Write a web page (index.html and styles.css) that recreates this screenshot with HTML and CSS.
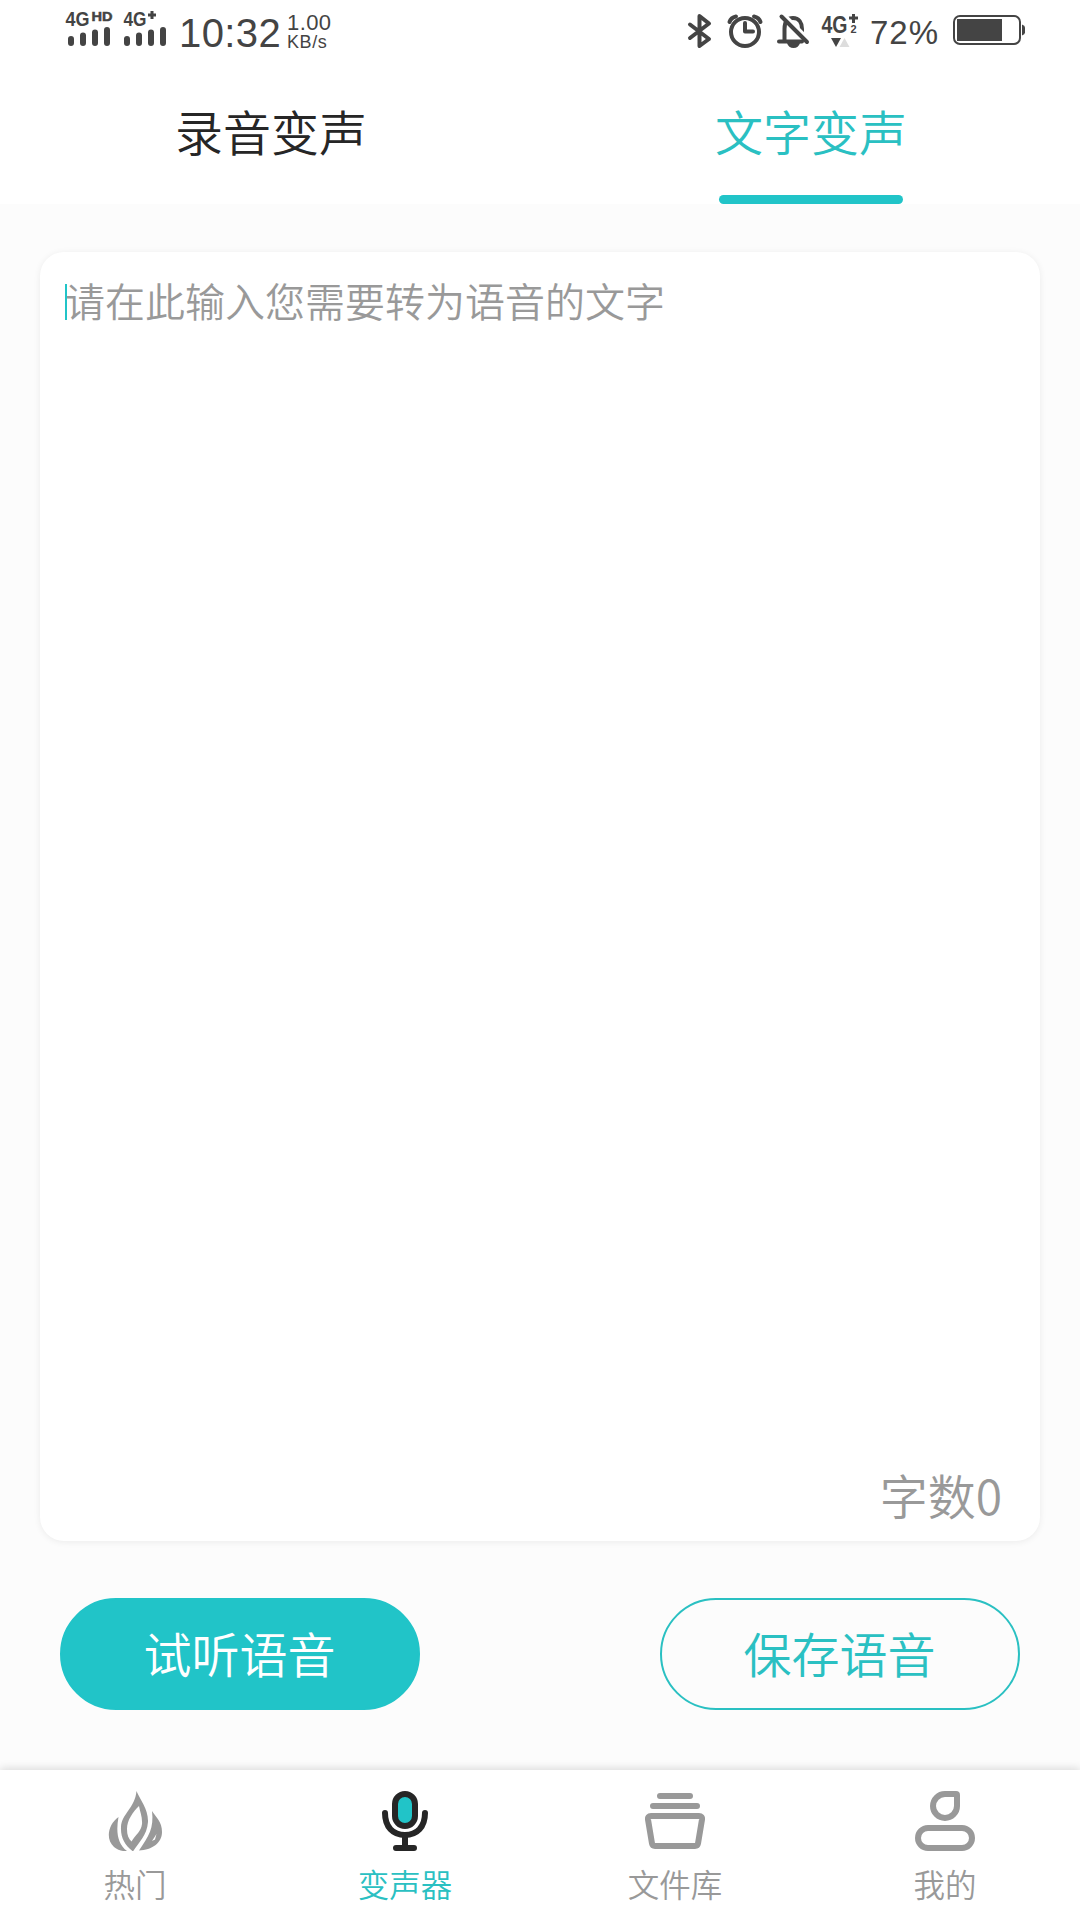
FILE: index.html
```html
<!doctype html>
<html lang="zh-CN">
<head>
<meta charset="utf-8">
<title>变声器</title>
<link rel="stylesheet" href="styles.css">
</head>
<body>
<div class="page">
	<div class="header">
		<div class="status">
			<svg class="signal" width="106" height="60" viewBox="64 0 106 60">
				<text class="net" x="65.5" y="26" textLength="24" lengthAdjust="spacingAndGlyphs">4G</text>
				<text class="sup" x="91.500" y="20.500" textLength="21" lengthAdjust="spacingAndGlyphs">HD</text>
				<text class="net" x="123.5" y="26" textLength="23" lengthAdjust="spacingAndGlyphs">4G</text>
				<path class="line3" d="M148 15h8M152 11v8"/>
				<path class="bars" d="M71 39v4M83 35.500v7.500M95 32.500v10.500M107 30v13M127 39v4M139 35.500v7.500M151 32.500v10.500M163 30v13"/>
			</svg>
			<span class="time">10:32</span>
			<span class="speed"><span>1.00</span><small>KB/s</small></span>
			<svg class="icons" width="175" height="60" viewBox="686 0 175 60">
				<path class="line4" d="M690 24.500L709 39L699.500 46V16L709 23.500L690 38"/>
				<circle class="line4" cx="745" cy="32" r="14"/>
				<path class="line4" d="M745 23v8.500h8"/>
				<path class="line4" d="M729.500 22Q731 17.500 736 16.500M760.500 22Q759 17.500 754 16.500"/>
				<path class="line4" d="M784.500 41V29C784.500 21 788 18 793 18C799 18 802 23 802 29V36M779 41.500H802"/>
				<path class="fill" d="M787 43h13q-1.500 5-6.500 5t-6.500-5z"/>
				<path class="cut" d="M784 15l27 27"/>
				<path class="line4" d="M781.500 16.500L807 42"/>
				<text class="net4" x="821.500" y="32.500" textLength="26" lengthAdjust="spacingAndGlyphs">4G</text>
				<path class="line3" d="M849 18h9M853.500 14v9"/>
				<text class="two" x="850.500" y="33">2</text>
				<path class="fill" d="M831 38h10l-5 9z"/>
				<path class="faint" d="M839.500 47h10l-5-9z"/>
			</svg>
			<span class="percent">72%</span>
			<svg class="battery" width="74" height="32" viewBox="952 15 74 32">
				<rect class="line2" x="954" y="17" width="66" height="28" rx="6"/>
				<path class="fill" d="M957 20h45v22h-45z"/>
				<path class="fill" d="M1022 25.500q3 1 3 3v5q0 2-3 3z"/>
			</svg>
		</div>
		<ul class="tabs">
			<li>录音变声</li>
			<li class="on">文字变声</li>
		</ul>
	</div>
	<div class="main">
		<div class="card">
			<p class="hint">请在此输入您需要转为语音的文字</p>
			<p class="count">字数0</p>
		</div>
		<div class="btns">
			<button class="btn full">试听语音</button>
			<button class="btn">保存语音</button>
		</div>
	</div>
	<ul class="nav">
		<li>
			<svg width="60" height="60" viewBox="0 0 60 60">
				<path class="gray" fill-rule="evenodd" d="M31.500 0C35 9 43.500 18 43 31C42 45 33 52 28 60.500C20 54 15.500 47 16 36C16.500 23 30 17 31.500 0zM34 15C28 21 22 29 22 38C22 44 23.500 48 26.500 50.500C31 43 36 41 37 33C37.500 26 35 21 34 15z"/>
				<path class="gray" d="M13.500 26C3.500 33 0 48 9 56C13 59.500 18 60.500 22 60C12 52 11 40 13.500 26z"/>
				<path class="gray" d="M47 20C49 37 44 45 34 59.500C47 59 57 52 57 41C57 31 51 26 47 20z"/>
				<path class="white" d="M51.500 43l-1.500 5.500l-3 1.500q2-3 4.500-7z"/>
			</svg>
			<span>热门</span>
		</li>
		<li class="on">
			<svg width="60" height="60" viewBox="0 0 60 60">
				<rect class="mic" x="20" y="3" width="20" height="32" rx="10"/>
				<path class="stand" d="M10 22C10 36 18 44 30 44S50 36 50 22M30 45v12M21 57h18"/>
			</svg>
			<span>变声器</span>
		</li>
		<li>
			<svg width="60" height="60" viewBox="0 0 60 60">
				<path class="lib" d="M15 5h30M8 15h44M6 25h48q3.500 0 3 3.500l-4 24q-.5 2.500-3 2.500H10q-2.500 0-3-2.500L3 28.500Q2.500 25 6 25z"/>
			</svg>
			<span>文件库</span>
		</li>
		<li>
			<svg width="60" height="60" viewBox="0 0 60 60">
				<path class="lib" d="M30 3H41Q42 3 42 4V15A12 12 0 1 1 30 3z"/>
				<rect class="lib" x="3" y="37" width="54" height="20" rx="10"/>
			</svg>
			<span>我的</span>
		</li>
	</ul>
</div>
</body>
</html>
```
FILE: styles.css
```css
*{
	margin:0;
	padding:0;
	box-sizing:border-box;
}
body{
	font-family:"Noto Sans CJK SC",sans-serif;
	background:#fcfcfc;
}
ul{list-style:none;}
svg{display:block;}
.page{
	width:1080px;
	height:1920px;
	display:flex;
	flex-direction:column;
}
.header{
	height:204px;
	background:#fff;
}
/* 状态栏 */
.status{
	height:60px;
	padding:0 54px 0 64px;
	display:flex;
	align-items:center;
	font-family:"Liberation Sans",sans-serif;
	color:#444;
}
.time{
	width:104px;
	margin-left:9px;
	padding-top:6px;
	font-size:40px;
	letter-spacing:.4px;
	line-height:46px;
}
.speed{
	width:50px;
	margin-left:4px;
	padding-top:3px;
	font-size:22px;
	letter-spacing:.4px;
	line-height:20px;
}
.speed span,
.speed small{display:block;}
.speed small{
	font-size:18px;
	letter-spacing:.6px;
	line-height:18px;
}
.icons{margin-left:auto;}
.percent{
	width:70px;
	margin-left:9px;
	padding-top:5px;
	font-size:33px;
	letter-spacing:1px;
	line-height:38px;
}
.battery{margin-left:12px;}
.net{font:bold 20px "Liberation Sans",sans-serif;fill:#444;}
.net4{font:bold 24px "Liberation Sans",sans-serif;fill:#444;}
.sup{
	font:bold 13px "Liberation Sans",sans-serif;
	fill:#444;
	stroke:#444;
	stroke-width:.5px;
}
.two{font:bold 11px "Liberation Sans",sans-serif;fill:#444;}
.fill{fill:#444;}
.faint{fill:#ddd;}
.bars,.line4,.line3,.line2,.cut{
	fill:none;
	stroke:#444;
	stroke-linecap:round;
	stroke-linejoin:round;
}
.bars{stroke-width:6px;}
.line4{stroke-width:4px;}
.line3{stroke-width:3px;stroke-linecap:butt;}
.line2{stroke-width:2px;}
.cut{stroke:#fff;stroke-width:4px;}
/* 顶部切换 */
.tabs{
	height:144px;
	display:flex;
}
.tabs li{
	flex:1;
	display:flex;
	flex-direction:column;
	align-items:center;
	justify-content:space-between;
	padding:35px 0 0 2px;
	font-size:48px;
	font-weight:350;
	line-height:70px;
	color:#262626;
}
.tabs .on{color:#2ac0c2;}
.tabs .on::after{
	content:"";
	width:184px;
	height:9px;
	border-radius:5px;
	background:#21c4c8;
}
/* 输入区 */
.main{
	flex:1;
	padding:48px 40px 0;
}
.card{
	height:1289px;
	padding:19px 38px 12px 25px;
	display:flex;
	flex-direction:column;
	justify-content:space-between;
	border-radius:24px;
	background:#fff;
	box-shadow:0 1px 7px rgba(0,0,0,.07);
	font-weight:350;
	color:#999;
}
.hint{
	position:relative;
	font-size:40px;
	line-height:58px;
}
.hint::before{
	content:"";
	position:absolute;
	left:0;
	top:13px;
	width:2px;
	height:36px;
	background:#21c4c8;
}
.count{
	font-size:48px;
	line-height:70px;
	text-align:right;
}
.btns{
	display:flex;
	justify-content:space-between;
	padding:57px 20px 0;
}
.btn{
	width:360px;
	height:112px;
	padding:0 1px 5px 0;
	border:2px solid #2ac0c2;
	border-radius:56px;
	background:none;
	font-family:inherit;
	font-size:48px;
	font-weight:350;
	color:#2ac0c2;
}
.full{
	border-color:#21c4c8;
	background:#21c4c8;
	color:#fff;
}
/* 底部导航 */
.nav{
	height:150px;
	display:flex;
	background:#fff;
	box-shadow:0 -2px 8px rgba(0,0,0,.13);
}
.nav li{
	flex:1;
	display:flex;
	flex-direction:column;
	align-items:center;
	padding-top:21px;
	font-size:31.5px;
	font-weight:350;
	line-height:46px;
	color:#999;
}
.nav span{margin-top:9px;}
.nav .on{color:#2ac0c2;}
.gray{fill:#999;}
.white{fill:#fff;}
.mic{
	fill:#21c4c8;
	stroke:#262626;
	stroke-width:6px;
}
.stand,.lib{
	fill:none;
	stroke:#262626;
	stroke-width:6px;
	stroke-linecap:round;
	stroke-linejoin:round;
}
.lib{stroke:#999;}
```
